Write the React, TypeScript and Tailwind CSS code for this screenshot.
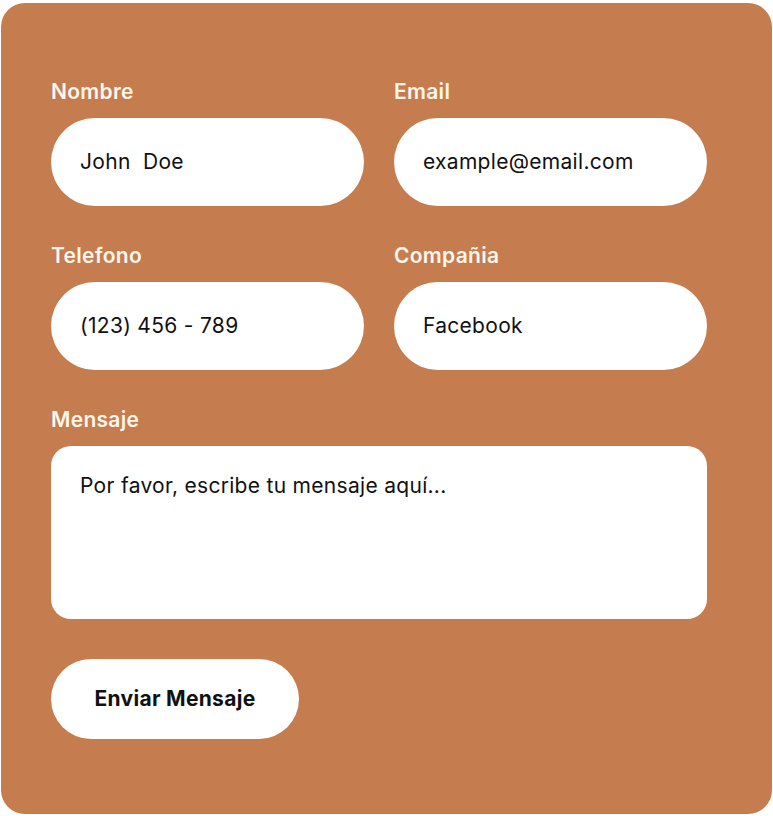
const fields = [
  { label: 'Nombre', value: 'John  Doe' },
  { label: 'Email', value: 'example@email.com' },
  { label: 'Telefono', value: '(123) 456 - 789' },
  { label: 'Compañia', value: 'Facebook' },
];

export default function App() {
  return (
    <div className="min-h-screen bg-white pt-[3px] pl-[1px] font-['Inter',sans-serif]">
      <div className="w-[771px] h-[811px] rounded-[24px] bg-[#C57C4E] pl-[50px] pt-[75px]">
        <form className="w-[656px]" onSubmit={(e) => e.preventDefault()}>
          <div className="grid grid-cols-2 gap-x-[30px] gap-y-[36px]">
            {fields.map((f) => (
              <div key={f.label} className="flex flex-col gap-[12px]">
                <label className="text-[21px] leading-[28px] font-semibold tracking-[0.3px] text-[#FFF6EC]">
                  {f.label}
                </label>
                <div className="h-[88px] rounded-full bg-white px-[29px] flex items-center text-[21px] tracking-[0.3px] text-[#111] whitespace-pre">
                  {f.value}
                </div>
              </div>
            ))}
          </div>
          <div className="mt-[36px] flex flex-col gap-[12px]">
            <label className="text-[21px] leading-[28px] font-semibold tracking-[0.3px] text-[#FFF6EC]">
              Mensaje
            </label>
            <div className="h-[173px] rounded-[20px] bg-white px-[29px] pt-[24px] text-[21px] tracking-[0.3px] text-[#111]">
              Por favor, escribe tu mensaje aquí...
            </div>
          </div>
          <button
            type="submit"
            className="mt-[40px] w-[248px] h-[80px] rounded-full bg-white text-[21px] font-bold tracking-[0.3px] text-[#111]"
          >
            Enviar Mensaje
          </button>
        </form>
      </div>
    </div>
  );
}
